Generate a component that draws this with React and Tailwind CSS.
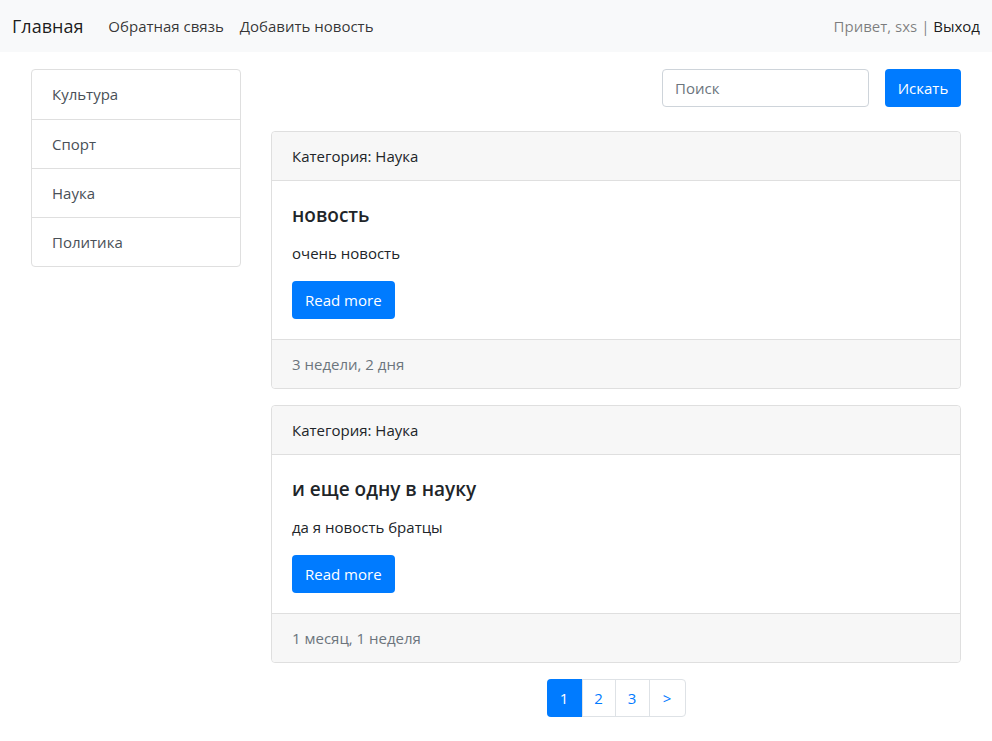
import React from 'react';

const categories = ['Культура', 'Спорт', 'Наука', 'Политика'];

const posts = [
  { category: 'Наука', title: 'новость', text: 'очень новость', age: '3 недели, 2 дня' },
  { category: 'Наука', title: 'и еще одну в науку', text: 'да я новость братцы', age: '1 месяц, 1 неделя' },
];

function PostCard({ post }) {
  return (
    <div className="border border-[#dfdfdf] rounded-[4px] bg-white mb-4">
      <div className="h-[49px] px-5 flex items-center bg-[#f7f7f7] border-b border-[#dfdfdf] rounded-t-[4px] text-[#212529]">
        Категория: {post.category}
      </div>
      <div className="p-5">
        <h5 className="text-[19px] font-semibold leading-[28px] mb-3 text-[#212529]">{post.title}</h5>
        <p className="mb-4 leading-6 text-[#212529]">{post.text}</p>
        <button className="h-[38px] px-[13px] rounded-[4px] bg-[#007bff] text-white">Read more</button>
      </div>
      <div className="h-[49px] px-5 flex items-center bg-[#f7f7f7] border-t border-[#dfdfdf] rounded-b-[4px] text-[#6c757d]">
        {post.age}
      </div>
    </div>
  );
}

export default function App() {
  return (
    <div className="min-h-screen bg-white text-[15px] text-[#212529]" style={{ fontFamily: '"Open Sans", "Noto Sans", sans-serif' }}>
      <nav className="h-[52px] bg-[#f8f9fa] flex items-center px-3">
        <a className="text-[18px] text-[rgba(0,0,0,0.9)] mr-[25px]">Главная</a>
        <a className="text-[rgba(0,0,0,0.8)] mr-4">Обратная связь</a>
        <a className="text-[rgba(0,0,0,0.8)]">Добавить новость</a>
        <div className="ml-auto">
          <span className="text-[rgba(0,0,0,0.5)]">Привет, sxs | </span>
          <a className="text-[rgba(0,0,0,0.9)]">Выход</a>
        </div>
      </nav>
      <div className="w-[930px] mx-auto flex gap-[30px] pt-[17px]">
        <div className="w-[210px] shrink-0">
          <div className="border border-[#dfdfdf] rounded-[4px]">
            {categories.map((c, i) => (
              <div
                key={c}
                className={`h-[49px] px-5 flex items-center text-[#495057] ${i > 0 ? 'border-t border-[#dfdfdf]' : ''}`}
              >
                {c}
              </div>
            ))}
          </div>
        </div>
        <div className="flex-1">
          <div className="flex justify-end gap-4 mb-6">
            <input
              className="w-[207px] h-[38px] px-3 border border-[#ced4da] rounded-[4px] outline-none placeholder-[#6c757d]"
              placeholder="Поиск"
            />
            <button className="h-[38px] w-[76px] rounded-[4px] bg-[#007bff] text-white">Искать</button>
          </div>
          {posts.map((p, i) => (
            <PostCard key={i} post={p} />
          ))}
          <div className="flex justify-center mt-4">
            <div className="flex h-[38px] border border-[#dee2e6] rounded-[4px]">
              <span className="w-[35px] flex items-center justify-center bg-[#007bff] text-white rounded-l-[4px] -m-px h-[38px]">1</span>
              <span className="w-[33px] flex items-center justify-center text-[#007bff] border-l border-[#dee2e6] ml-px">2</span>
              <span className="w-[34px] flex items-center justify-center text-[#007bff] border-l border-[#dee2e6]">3</span>
              <span className="w-[36px] flex items-center justify-center text-[#007bff] border-l border-[#dee2e6]">&gt;</span>
            </div>
          </div>
        </div>
      </div>
    </div>
  );
}
